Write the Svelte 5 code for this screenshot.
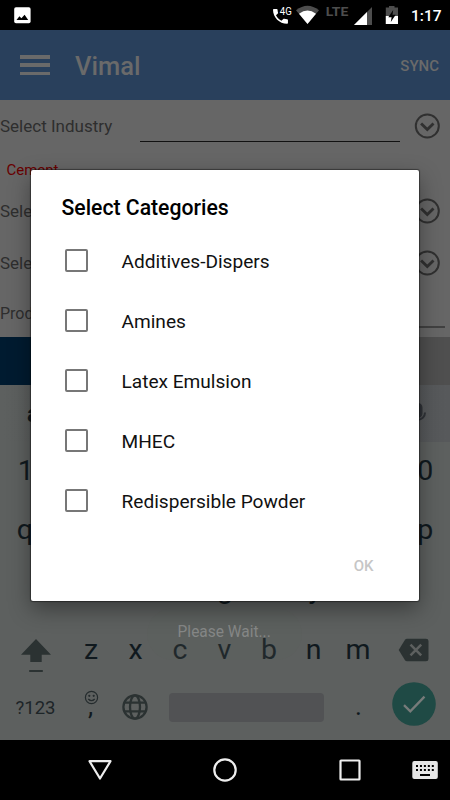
<script>
  const categories = ['Additives-Dispers', 'Amines', 'Latex Emulsion', 'MHEC', 'Redispersible Powder'];
  const digits = [...'1234567890'];
  const top = [...'qwertyuiop'];
  const home = [...'asdfghjkl'];
  const bottom = [...'zxcvbnm'];
  const dots = [0, 1, 2, 3, 4];
</script>

{#snippet chevron()}
  <svg class="chev" width="26" height="26" viewBox="0 0 26 26" fill="none" stroke="#303030">
    <circle cx="13.3" cy="13" r="11.5" stroke-width="2" />
    <path d="M7.1 10.4 13.3 16.5 19.500 10.4" stroke-width="2.8" />
  </svg>
{/snippet}

<div class="screen">
  <div class="status">
    <svg class="pic" width="17" height="17" viewBox="0 0 17 17">
      <rect x=".2" y=".2" width="16.4" height="16" rx="1.8" fill="#fff" />
      <path d="M2.5 13 5.4 9.2 7.4 11.3 10.6 7.8 14.2 13Z" fill="#000" />
    </svg>
    <svg class="icons" width="132" height="30" viewBox="0 0 132 30">
      <path transform="translate(-2.9 6.9) scale(.83)" d="M5.700 2.500H9.200C9.800 2.500 10.200 3 10.200 3.500c0 1.200.2 2.400.6 3.500.1.4 0 .8-.3 1.100l-2.200 2.100c1.400 2.800 3.800 5.100 6.600 6.500l2.200-2.100c.3-.3.700-.4 1.100-.3 1.100.4 2.300.6 3.500.6.6 0 1 .4 1 1v3.500c0 .6-.4 1-1 1C12.400 20.400 4.700 12.800 4.700 3.500c0-.6.4-1 1-1Z" fill="#fff" />
      <text x="7.8" y="15" fill="#fff" font-size="10.5" textLength="12" lengthAdjust="spacingAndGlyphs">4G</text>
      <path d="M24 10.300Q35.500 1 47 10.300L35.500 24Z" fill="#4d4d4d" />
      <path d="M27 13.800Q35.500 7 44 13.800L35.500 24Z" fill="#fff" />
      <text x="53.8" y="16" fill="#4d4d4d" font-size="13.5" font-weight="700" textLength="22.5" lengthAdjust="spacingAndGlyphs">LTE</text>
      <path d="M82 25 100 7V25Z" fill="#4d4d4d" />
      <path d="M82 25 95 12V25Z" fill="#fff" />
      <path d="M113.800 7.500H117V6H122.500V7.500H126V24H113.800Z" fill="#4d4d4d" />
      <path d="M113.800 16H126V24H113.800Z" fill="#fff" />
      <path d="M121.200 10 116.300 17.300H119.600L118.800 22 123.700 14.800H120.500Z" fill="#000" />
    </svg>
    <span class="clock">1:17</span>
  </div>

  <header>
    <div class="menu"><i></i><i></i><i></i></div>
    <h1>Vimal</h1>
    <span class="sync">SYNC</span>
  </header>

  <main>
    <div class="field first"><span>Select Industry</span><div class="line"></div>{@render chevron()}</div>
    <div class="chosen">Cement</div>
    <div class="field"><span>Select</span>{@render chevron()}</div>
    <div class="field"><span>Select</span>{@render chevron()}</div>
    <div class="field product"><span>Product</span><div class="line"></div></div>
  </main>
  <div class="buttons"><div></div><div></div></div>

  <section class="keyboard">
    <div class="suggest">
      <b>and</b>
      <svg width="26" height="30" viewBox="0 0 26 30" fill="none" stroke="#303338" stroke-width="2">
        <rect x="9.500" y="5" width="7" height="13" rx="3.500" fill="#303338" />
        <path d="M6 13.500c0 9.500 14 9.500 14 0M13 21v4" />
      </svg>
    </div>
    <div class="keys num">{#each digits as k}<span>{k}</span>{/each}</div>
    <div class="keys">{#each top as k}<span>{k}</span>{/each}</div>
    <div class="keys home">{#each home as k}<span>{k}</span>{/each}</div>
    <div class="keys z">
      <div class="shift">
        <svg width="32" height="36" viewBox="0 0 32 36" fill="#2b3232">
          <path d="M16 1 31 16.700H21.700V24H10.300V16.700H1Z" /><rect x="9.200" y="32" width="13.600" height="2" />
        </svg>
      </div>
      {#each bottom as k}<span>{k}</span>{/each}
      <div class="del">
        <svg width="31" height="24" viewBox="0 0 31 24">
          <path d="M9 .7H28Q30.500.7 30.500 3V21Q30.500 23.300 28 23.300H9Q7.700 23.300 7 22.200L.7 12 7 1.800Q7.700.7 9 .7Z" fill="#2b3232" />
          <path d="M12.500 6.700 23.200 17.400M23.200 6.700 12.500 17.400" stroke="#5d605f" stroke-width="2.500" />
        </svg>
      </div>
    </div>
    <div class="last">
      <span class="sym">?123</span>
      <div class="comma">
        <svg width="15" height="15" viewBox="0 0 15 15" fill="none" stroke="#242b2d" stroke-width="1.200">
          <circle cx="7.500" cy="7.500" r="6.100" /><path d="M4.300 9Q7.500 12.300 10.700 9" />
          <circle cx="5.300" cy="5.800" r=".5" /><circle cx="9.700" cy="5.800" r=".5" />
        </svg>
        <span>,</span>
      </div>
      <svg class="globe" width="26" height="26" viewBox="0 0 26 26" fill="none" stroke="#2b3232" stroke-width="2.300">
        <circle cx="13" cy="13" r="11.600" /><ellipse cx="13" cy="13" rx="5" ry="11.600" /><path d="M2.500 8.700H23.500M2.500 17.300H23.500" />
      </svg>
      <div class="space"></div>
      <span class="dot">.</span>
      <svg class="done" width="44" height="44" viewBox="0 0 44 44" fill="none">
        <circle cx="22" cy="22" r="21.800" fill="#1f4a45" /><path d="M12 23.200 18.300 29.300 32.500 14.600" stroke="#777b7a" stroke-width="2.300" />
      </svg>
    </div>
  </section>

  <nav>
    <svg width="450" height="60" viewBox="0 0 450 60" fill="none" stroke="#eee" stroke-width="2.200" stroke-linejoin="round">
      <path d="M89.500 21.200H110.500L100 38.500Z" /><circle cx="225" cy="30" r="10.700" /><rect x="340.500" y="20.500" width="19" height="19" rx=".5" />
      <rect x="412.300" y="21" width="25.500" height="18" rx="2" fill="#e6e6e6" stroke="none" />
      <g fill="#000" stroke="none">
        {#each dots as d}<rect x={416 + d * 3.95} y="25" width="2" height="2" /><rect x={416 + d * 3.95} y="29" width="2" height="2" />{/each}
        <rect x="420" y="34" width="10" height="2" />
      </g>
    </svg>
  </nav>

  <div class="toast"><span>Please Wait...</span></div>

  <div class="dialog">
    <h2>Select Categories</h2>
    {#each categories as c}
      <label><i></i><span>{c}</span></label>
    {/each}
    <div class="ok">OK</div>
  </div>
</div>

<style>
  :global(body) { margin: 0; background: #000; }
  .screen { position: relative; width: 450px; height: 800px; overflow: hidden; display: flex; flex-direction: column; font-family: Roboto, sans-serif; background: #666; }
  .screen * { box-sizing: border-box; }
  svg { display: block; flex: none; }
  .status { height: 30px; flex: none; background: #000; display: flex; align-items: flex-start; color: #fff; }
  .pic { margin: 7px 0 0 14px; }
  .icons { margin-left: 241px; overflow: visible; }
  .clock { font-size: 15.500px; font-weight: 500; line-height: 32px; margin-left: 7px; }
  header { height: 70px; flex: none; background: #29405c; display: flex; align-items: center; padding: 0 11px 0 20px; color: #6a6a6a; }
  .menu { width: 30px; height: 20px; display: flex; flex-direction: column; justify-content: space-between; }
  .menu i { height: 3.500px; background: #6a6a6a; }
  h1 { font-size: 25.500px; font-weight: 500; margin: 2px 0 0 25px; line-height: 30px; flex: 1; }
  .sync { font-size: 15px; font-weight: 500; margin-top: 2px; }
  main { height: 237px; flex: none; color: #2e2e2e; font-size: 17px; }
  .field { height: 52px; display: flex; align-items: center; padding-right: 10px; }
  .field > span { width: 140px; white-space: nowrap; }
  .chev { margin-left: auto; }
  .first { height: 54px; }
  .first > span { margin-top: -2px; }
  .first .line { width: 260px; height: 1px; background: #111; margin-top: 29px; }
  .first > .chev { margin-top: -2px; }
  .chosen { height: 31px; line-height: 32px; padding-left: 6.500px; font-size: 15px; color: #690000; }
  .product { padding-right: 5px; height: 48px; }
  .product > span { font-size: 16px; padding-top: 1px; }
  .product .line { flex: 1; height: 2px; background: #414141; margin-top: 27px; }
  .buttons { height: 48px; flex: none; display: flex; }
  .buttons div { flex: 1; background: #4f4f4f; }
  .buttons div:first-child { background: #001b30; }
  .keyboard { height: 355px; flex: none; background: #5d605f; color: #10191e; }
  .suggest { height: 57px; background: linear-gradient(90deg, #5d605f, #57595b); display: flex; justify-content: space-between; align-items: center; padding: 0 19px 0 27px; font-size: 24px; }
  .keys { height: 60px; display: flex; padding: 0 2.500px; font-size: 28.500px; line-height: 64px; }
  .keys span { width: 44.500px; text-align: center; flex: none; }
  .num { height: 56px; line-height: 57px; }
  .num span:first-child { padding-left: 2px; }
  .home { padding-left: 24.750px; height: 64px; line-height: 62px; }
  .z { padding: 0; height: 56px; line-height: 55px; }
  .shift { width: 68.750px; padding: 16px 0 0 20px; }
  .del { padding: 16px 0 0 18px; }
  .last { height: 62px; display: flex; }
  .sym { width: 84px; padding-left: 15.500px; line-height: 60px; font-size: 18.500px; color: #1d2528; }
  .comma { width: 38px; padding-top: 12px; }
  .comma span { display: block; font-size: 26px; line-height: 26px; margin: -12px 0 0 4px; }
  .globe { margin-top: 16px; }
  .space { width: 155px; height: 29px; border-radius: 4px; background: #515254; margin: 15px 0 0 21px; }
  .dot { width: 68px; padding-left: 31px; font-size: 26px; line-height: 57px; }
  .done { margin-top: 4px; }
  nav { height: 60px; flex: none; background: #000; }
  .toast { position: absolute; left: 147px; top: 608px; width: 155px; height: 52px; border-radius: 26px; background: rgba(91, 94, 93, .22); color: #858786; font: 17px/47px Roboto, sans-serif; text-align: center; white-space: nowrap; }
  .toast span { display: inline-block; transform: scaleX(.91); }
  .dialog { position: absolute; left: 31px; top: 169.500px; width: 388px; height: 431px; background: #fff; border-radius: 2px; padding: 23px 0 0 31px; box-shadow: 0 0 1px 1px rgba(0, 0, 0, .4), 0 8px 22px rgba(0, 0, 0, .38); color: #111; }
  h2 { font-size: 21.200px; font-weight: 500; line-height: 30px; margin: 0 0 8.500px -.5px; color: #000; }
  label { height: 60px; display: flex; align-items: center; font-size: 19.100px; }
  label i { width: 23px; height: 23px; border: 2px solid #777; border-radius: 2px; margin: -2px 33.500px 0 3px; }
  .ok { margin: 23px 45.500px 0 0; text-align: right; font-size: 15px; line-height: 24px; font-weight: 500; color: #c6c6c6; }
</style>
